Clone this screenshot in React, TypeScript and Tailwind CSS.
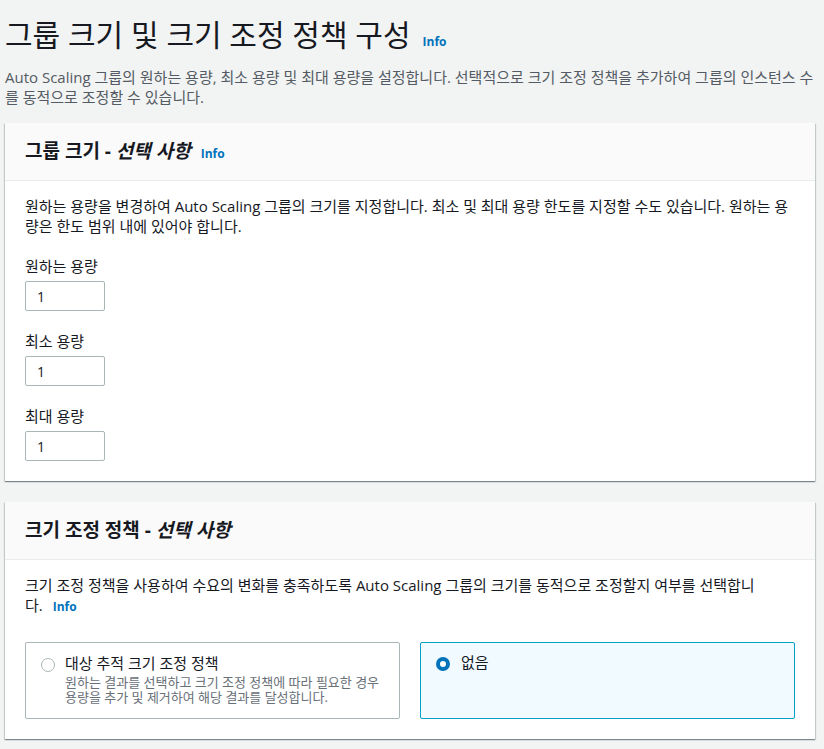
import React from "react"

const font = { fontFamily: '"Open Sans", "Noto Sans CJK KR", sans-serif' }

function Info({ className = "" }: { className?: string }) {
  return <span className={`text-[12px] font-bold text-[#0073bb] leading-[16px] ${className}`}>Info</span>
}

function Field({ label }: { label: string }) {
  return (
    <div className="mt-5">
      <div className="text-[15px] leading-[20px] text-[#16191f]">{label}</div>
      <input
        defaultValue="1"
        className="mt-[5px] block h-[30px] w-[80px] rounded-[2px] border border-[#aab7b8] bg-white px-[11px] text-[14px] text-[#16191f] outline-none"
      />
    </div>
  )
}

function Card({ title, info, children }: { title: React.ReactNode; info?: boolean; children: React.ReactNode }) {
  return (
    <section className="w-[810px] bg-white shadow-[0_1px_1px_0_rgba(0,28,36,0.3),1px_1px_1px_0_rgba(0,28,36,0.15),-1px_1px_1px_0_rgba(0,28,36,0.15)]">
      <div className="flex items-baseline gap-[10px] border-b border-[#eaeded] bg-[#fafafa] px-5 pt-[17px] pb-[18px]">
        <h2 className="text-[19px] font-bold leading-[22px] text-[#16191f]">{title}</h2>
        {info && <Info />}
      </div>
      <div className="px-5 pt-[15px] pb-5">{children}</div>
    </section>
  )
}

export default function App() {
  return (
    <div className="min-h-screen bg-[#f2f3f3] pl-[5px] pb-10" style={font}>
      <div className="flex items-baseline gap-3 pt-[17px]">
        <h1 className="text-[30px] font-normal leading-[36px] text-[#16191f]">그룹 크기 및 크기 조정 정책 구성</h1>
        <Info />
      </div>
      <p className="mt-[14px] w-[810px] text-[15px] leading-[20px] text-[#545b64]">
        Auto Scaling 그룹의 원하는 용량, 최소 용량 및 최대 용량을 설정합니다. 선택적으로 크기 조정 정책을 추가하여 그룹의 인스턴스 수를 동적으로 조정할 수 있습니다.
      </p>

      <div className="mt-4">
        <Card
          info
          title={
            <>
              그룹 크기 - <i>선택 사항</i>
            </>
          }
        >
          <p className="text-[15px] leading-[20px] text-[#16191f]">
            원하는 용량을 변경하여 Auto Scaling 그룹의 크기를 지정합니다. 최소 및 최대 용량 한도를 지정할 수도 있습니다. 원하는 용량은 한도 범위 내에 있어야 합니다.
          </p>
          <Field label="원하는 용량" />
          <Field label="최소 용량" />
          <Field label="최대 용량" />
        </Card>
      </div>

      <div className="mt-[21px]">
        <Card
          title={
            <>
              크기 조정 정책 - <i>선택 사항</i>
            </>
          }
        >
          <p className="max-w-[740px] text-[15px] leading-[20px] text-[#16191f]">
            크기 조정 정책을 사용하여 수요의 변화를 충족하도록 Auto Scaling 그룹의 크기를 동적으로 조정할지 여부를 선택합니다.{" "}
            <Info className="ml-[6px] inline-block" />
          </p>
          <div className="mt-[27px] grid grid-cols-2 gap-5">
            <label className="flex h-[77px] gap-[10px] rounded-[2px] border border-[#aab7b8] bg-white px-[15px] pt-[14px]">
              <span className="mt-[1px] h-[14px] w-[14px] shrink-0 rounded-full border-[1.5px] border-[#aab7b8] bg-white" />
              <span className="-mt-[4px]">
                <span className="block text-[15px] leading-[20px] text-[#16191f]">대상 추적 크기 조정 정책</span>
                <span className="mt-[2px] block pr-[4px] text-[13px] leading-[15px] text-[#687078]">
                  원하는 결과를 선택하고 크기 조정 정책에 따라 필요한 경우 용량을 추가 및 제거하여 해당 결과를 달성합니다.
                </span>
              </span>
            </label>
            <label className="flex h-[77px] gap-[11px] rounded-[2px] border border-[#00a1c9] bg-[#f1faff] px-[15px] pt-[13px]">
              <span className="mt-[1px] h-[14px] w-[14px] shrink-0 rounded-full border-[4px] border-[#0073bb] bg-white" />
              <span className="-mt-[4px] block text-[15px] leading-[20px] text-[#16191f]">없음</span>
            </label>
          </div>
        </Card>
      </div>
    </div>
  )
}
